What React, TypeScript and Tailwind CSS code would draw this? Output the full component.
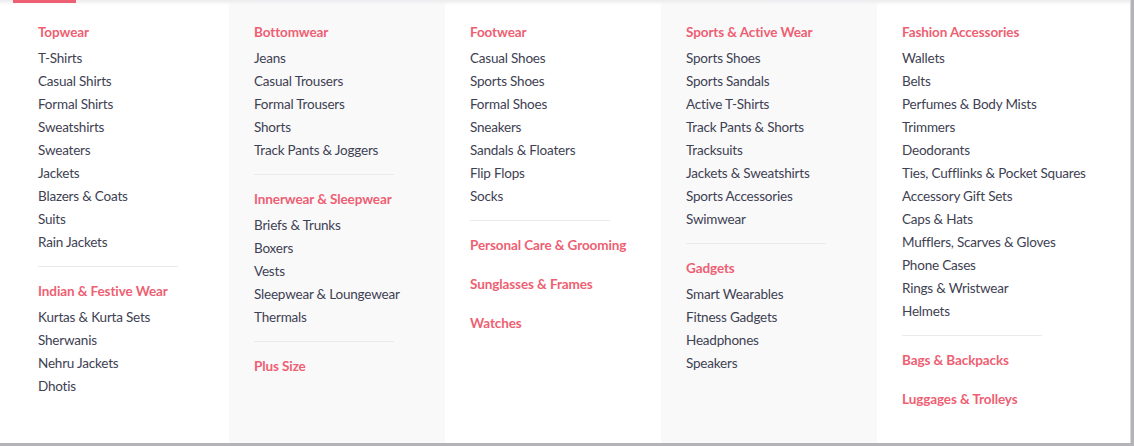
type Group = { title: string; items: string[] };

const columns: Group[][] = [
  [
    {
      title: 'Topwear',
      items: ['T-Shirts', 'Casual Shirts', 'Formal Shirts', 'Sweatshirts', 'Sweaters', 'Jackets', 'Blazers & Coats', 'Suits', 'Rain Jackets'],
    },
    { title: 'Indian & Festive Wear', items: ['Kurtas & Kurta Sets', 'Sherwanis', 'Nehru Jackets', 'Dhotis'] },
  ],
  [
    { title: 'Bottomwear', items: ['Jeans', 'Casual Trousers', 'Formal Trousers', 'Shorts', 'Track Pants & Joggers'] },
    { title: 'Innerwear & Sleepwear', items: ['Briefs & Trunks', 'Boxers', 'Vests', 'Sleepwear & Loungewear', 'Thermals'] },
    { title: 'Plus Size', items: [] },
  ],
  [
    { title: 'Footwear', items: ['Casual Shoes', 'Sports Shoes', 'Formal Shoes', 'Sneakers', 'Sandals & Floaters', 'Flip Flops', 'Socks'] },
    { title: 'Personal Care & Grooming', items: [] },
    { title: 'Sunglasses & Frames', items: [] },
    { title: 'Watches', items: [] },
  ],
  [
    {
      title: 'Sports & Active Wear',
      items: ['Sports Shoes', 'Sports Sandals', 'Active T-Shirts', 'Track Pants & Shorts', 'Tracksuits', 'Jackets & Sweatshirts', 'Sports Accessories', 'Swimwear'],
    },
    { title: 'Gadgets', items: ['Smart Wearables', 'Fitness Gadgets', 'Headphones', 'Speakers'] },
  ],
  [
    {
      title: 'Fashion Accessories',
      items: [
        'Wallets',
        'Belts',
        'Perfumes & Body Mists',
        'Trimmers',
        'Deodorants',
        'Ties, Cufflinks & Pocket Squares',
        'Accessory Gift Sets',
        'Caps & Hats',
        'Mufflers, Scarves & Gloves',
        'Phone Cases',
        'Rings & Wristwear',
        'Helmets',
      ],
    },
    { title: 'Bags & Backpacks', items: [] },
    { title: 'Luggages & Trolleys', items: [] },
  ],
];

const MenuColumn = ({ groups, shaded }: { groups: Group[]; shaded: boolean }) => {
  return (
    <div className={`w-[216px] shrink-0 px-[25px] pt-[21px] ${shaded ? 'bg-[#f9f9fa]' : 'bg-white'}`}>
      {groups.map((group, i) => {
        const prev = groups[i - 1];
        return (
          <div key={group.title}>
            {/* divider only after a group that has links */}
            {prev && prev.items.length > 0 && <div className="mt-[12px] mb-[13px] h-px w-[140px] bg-[#eaeaec]" />}
            {prev && prev.items.length === 0 && <div className="h-[16px]" />}
            <div className="text-[13.5px] leading-[23px] tracking-[-0.1px] font-bold text-[#ee5f73] whitespace-nowrap">{group.title}</div>
            {group.items.length > 0 && (
              <ul className="mt-[3px]">
                {group.items.map(item => (
                  <li key={item} className="text-[13.5px] leading-[23px] tracking-[-0.2px] text-[#3e4152] whitespace-nowrap">
                    {item}
                  </li>
                ))}
              </ul>
            )}
          </div>
        );
      })}
    </div>
  );
};

export default function App() {
  return (
    <div className="w-[1134px] h-[446px] bg-[#b4b4b8] overflow-hidden" style={{ fontFamily: 'Lato, "Noto Sans", sans-serif' }}>
      <div className="relative w-[1131px] h-[443px] bg-white border-r border-[#d8d8dc] flex pl-[13px] overflow-hidden">
        <div className="absolute left-0 top-0 right-0 h-[5px] bg-gradient-to-b from-[#ececee] to-transparent" />
        <div className="absolute left-[13px] top-0 w-[63px] h-[3px] bg-[#ee5f73]" />
        {columns.map((groups, i) => (
          <MenuColumn key={i} groups={groups} shaded={i % 2 === 1} />
        ))}
      </div>
    </div>
  );
}
